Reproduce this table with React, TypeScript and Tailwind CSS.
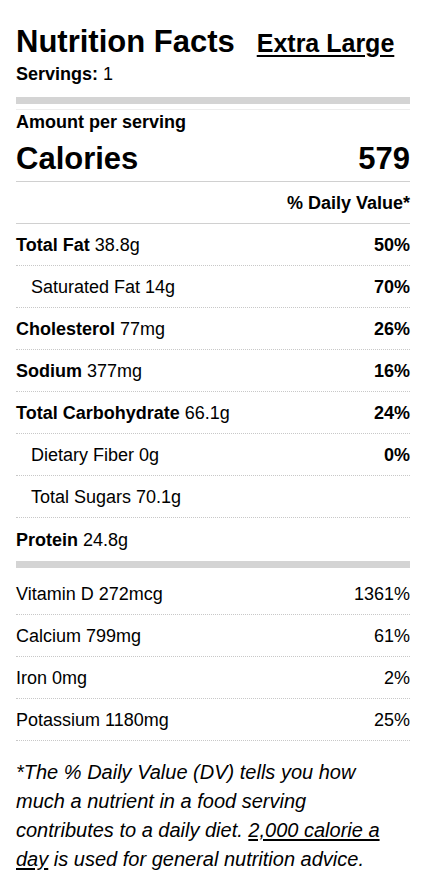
import React from 'react';

const nutrients = [
  { name: 'Total Fat', amount: '38.8g', dv: '50%', bold: true },
  { name: 'Saturated Fat', amount: '14g', dv: '70%', indent: true },
  { name: 'Cholesterol', amount: '77mg', dv: '26%', bold: true },
  { name: 'Sodium', amount: '377mg', dv: '16%', bold: true },
  { name: 'Total Carbohydrate', amount: '66.1g', dv: '24%', bold: true },
  { name: 'Dietary Fiber', amount: '0g', dv: '0%', indent: true },
  { name: 'Total Sugars', amount: '70.1g', dv: '', indent: true },
];

const vitamins = [
  { name: 'Vitamin D', amount: '272mcg', dv: '1361%' },
  { name: 'Calcium', amount: '799mg', dv: '61%' },
  { name: 'Iron', amount: '0mg', dv: '2%' },
  { name: 'Potassium', amount: '1180mg', dv: '25%' },
];

const App = () => {
  return (
    <div className="min-h-screen bg-white text-black font-['Liberation_Sans',Arial,sans-serif]">
      <div className="w-[394px] ml-4 pt-[24px]">
        {/* Title */}
        <div className="flex items-baseline">
          <h1 className="text-[31px] leading-[36px] font-bold">Nutrition Facts</h1>
          <span className="ml-[22px] text-[25px] leading-[30px] font-bold underline underline-offset-[3px]">
            Extra Large
          </span>
        </div>
        <div className="text-[18px] leading-[24px] mt-[2px]">
          <span className="font-bold">Servings:</span> 1
        </div>

        <div className="h-[7px] bg-[#d4d4d4] mt-[11px]" />
        <div className="h-px bg-[#ededed] mt-[5px]" />

        {/* Calories */}
        <div className="text-[18px] leading-[22px] font-bold mt-[1px]">Amount per serving</div>
        <div className="flex justify-between h-[49px] pt-[8px] border-b border-[#d0d0d0] text-[31px] leading-[36px] font-bold">
          <span>Calories</span>
          <span>579</span>
        </div>
        <div className="flex justify-end items-center h-[42px] pt-[2px] border-b border-[#d0d0d0] text-[18px] font-bold">
          % Daily Value*
        </div>

        {nutrients.map((n, i) => (
          <div
            key={i}
            className="flex justify-between items-center h-[42px] pt-[2px] border-b border-dotted border-[#c8c8c8] text-[18px]"
          >
            <span className={n.indent ? 'pl-[15px]' : ''}>
              {n.bold ? <span className="font-bold">{n.name}</span> : n.name} {n.amount}
            </span>
            <span className="font-bold">{n.dv}</span>
          </div>
        ))}
        <div className="flex items-center h-[43px] pt-[2px] text-[18px]">
          <span>
            <span className="font-bold">Protein</span> 24.8g
          </span>
        </div>
        <div className="h-[7px] bg-[#d4d4d4]" />
        <div className="h-[5px]" />

        {vitamins.map((v, i) => (
          <div
            key={i}
            className="flex justify-between items-center h-[42px] pt-[2px] border-b border-dotted border-[#c8c8c8] text-[18px]"
          >
            <span>
              {v.name} {v.amount}
            </span>
            <span>{v.dv}</span>
          </div>
        ))}

        {/* Footnote */}
        <p className="mt-[17px] w-[380px] text-[20px] leading-[29px] italic">
          *The % Daily Value (DV) tells you how much a nutrient in a food serving contributes to a daily diet.{' '}
          <span className="underline underline-offset-2">2,000 calorie a day</span> is used for general nutrition
          advice.
        </p>
      </div>
    </div>
  );
};

export default App;
